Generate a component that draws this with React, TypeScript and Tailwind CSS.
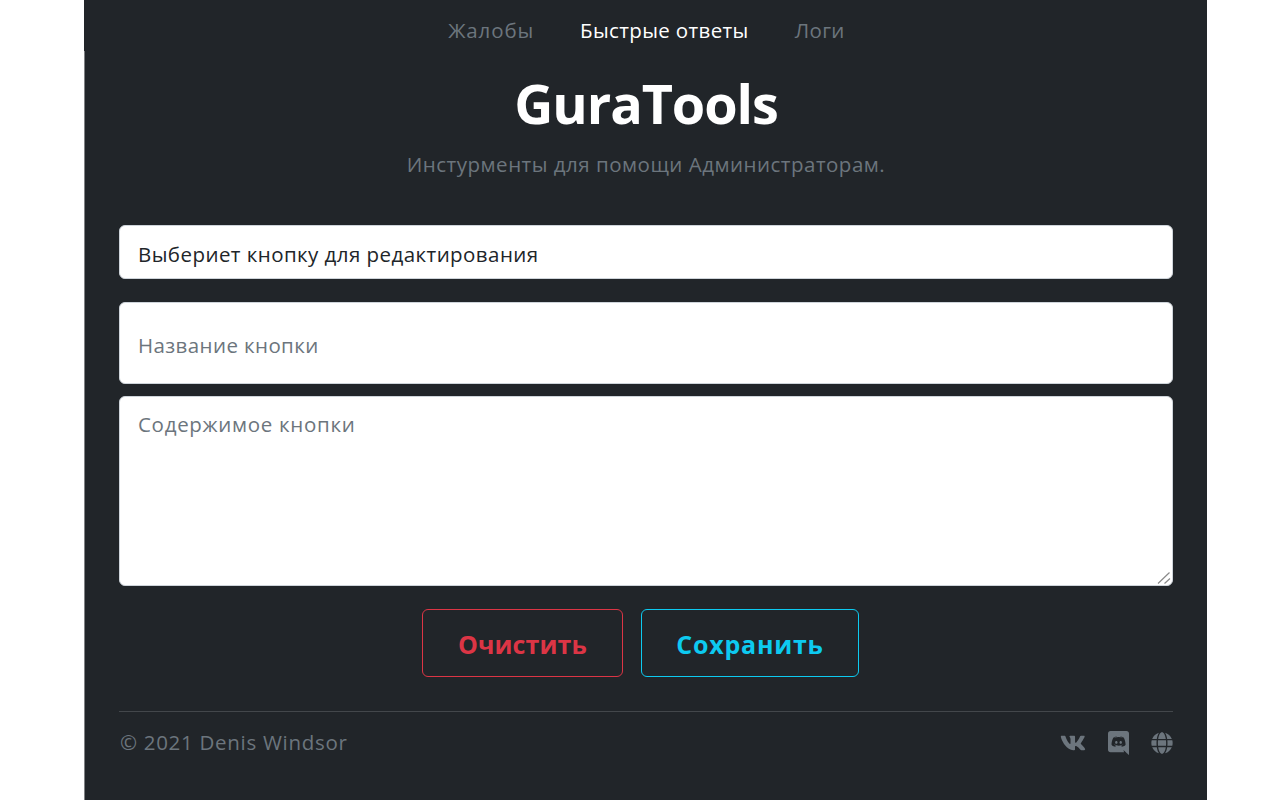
import { FaVk, FaGlobe } from "react-icons/fa";

const font = "font-['Open_Sans','Noto_Sans',sans-serif]";

function DiscordIcon() {
  return (
    <svg viewBox="0 0 448 512" className="w-[21px] h-[24px] fill-current">
      <path d="M297.216 243.2c0 15.616-11.52 28.416-26.112 28.416-14.336 0-26.112-12.8-26.112-28.416s11.52-28.416 26.112-28.416c14.592 0 26.112 12.8 26.112 28.416zm-119.552-28.416c-14.592 0-26.112 12.8-26.112 28.416s11.776 28.416 26.112 28.416c14.592 0 26.112-12.8 26.112-28.416.256-15.616-11.52-28.416-26.112-28.416zM448 52.736V512c-64.494-56.994-43.868-38.128-118.784-107.776l13.568 47.36H52.48C23.552 451.584 0 428.032 0 398.848V52.736C0 23.552 23.552 0 52.48 0h343.04C424.448 0 448 23.552 448 52.736zm-72.96 242.688c0-82.432-36.864-149.248-36.864-149.248-36.864-27.648-71.936-26.88-71.936-26.88l-3.584 4.096c43.52 13.312 63.744 32.512 63.744 32.512-60.813-33.329-132.244-33.335-191.232-7.424-9.472 4.352-15.104 7.424-15.104 7.424s21.248-20.224 67.328-33.536l-2.56-3.072s-35.072-.768-71.936 26.88c0 0-36.864 66.816-36.864 149.248 0 0 21.504 37.12 78.08 38.912 0 0 9.472-11.52 17.152-21.248-32.512-9.728-44.8-30.208-44.8-30.208 3.766 2.636 9.976 6.053 10.496 6.4 43.21 24.198 104.588 32.126 159.744 8.96 8.96-3.328 18.944-8.192 29.44-15.104 0 0-12.8 20.992-46.336 30.464 7.68 9.728 16.896 20.736 16.896 20.736 56.576-1.792 78.336-38.912 78.336-38.912z" />
    </svg>
  );
}

export default function App() {
  return (
    <div className={`h-[800px] bg-white overflow-hidden ${font}`}>
      <div className="ml-[84px] w-[1123px] h-[800px] bg-[#212529] flex flex-col">
        <nav className="h-[51px] shrink-0 flex justify-center gap-[46px] pt-[15px] pl-[2px] text-[20.5px] leading-[30px] tracking-[0.36px] text-[#6c757d]">
          <a className="tracking-[0.86px]">Жалобы</a>
          <a className="text-white">Быстрые ответы</a>
          <a>Логи</a>
        </nav>
        <div className="flex-1 border-l border-[#7f8184] px-[34px] flex flex-col">
          <h1 className="mt-[13px] text-center text-[54px] leading-[78px] tracking-[-1.1px] font-bold text-white">GuraTools</h1>
          <p className="mt-[7px] text-center text-[20.5px] leading-[30px] tracking-[0.5px] text-[#6c757d]">Инстурменты для помощи Администраторам.</p>
          <input
            readOnly
            value="Выбериет кнопку для редактирования"
            className="mt-[46px] h-[54px] w-full rounded-[6px] border border-[#ced4da] bg-white px-[18px] pt-[3px] text-[20.5px] tracking-[0.44px] text-[#212529] outline-none"
          />
          <input
            readOnly
            placeholder="Название кнопки"
            className="mt-[23px] h-[82px] w-full rounded-[6px] border border-[#ced4da] bg-white px-[18px] pt-[3px] text-[20.5px] tracking-[0.4px] text-[#212529] outline-none placeholder:text-[#6c757d]"
          />
          <div className="relative mt-[12px] h-[190px]">
            <textarea
              readOnly
              placeholder="Содержимое кнопки"
              className="block h-full w-full resize-none rounded-[6px] border border-[#ced4da] bg-white px-[18px] py-[12px] text-[20.5px] leading-[30px] tracking-[0.7px] text-[#212529] outline-none placeholder:text-[#6c757d]"
            />
            <svg viewBox="0 0 14 13" className="absolute right-[2px] bottom-[2px] w-[14px] h-[13px] stroke-[#8a8a8a]" fill="none">
              <path d="M1 12.5 L12.5 1.5 M7.5 12.5 L13 7.5" strokeWidth="1.2" />
            </svg>
          </div>
          <div className="mt-[23px] flex justify-center gap-[18px] pr-[11px]">
            <button className="h-[68px] w-[201px] rounded-[6px] border border-[#dc3545] pt-[3px] text-[25px] tracking-[0.1px] font-bold text-[#dc3545]">Очистить</button>
            <button className="h-[68px] w-[218px] rounded-[6px] border border-[#0dcaf0] pt-[3px] text-[25px] tracking-[0.75px] font-bold text-[#0dcaf0]">Сохранить</button>
          </div>
          <footer className="mt-[34px] border-t border-[#43474b] pt-[15px] flex items-center justify-between">
            <span className="pl-[1px] text-[20.5px] leading-[30px] tracking-[0.7px] text-[#6c757d]">© 2021 Denis Windsor</span>
            <div className="flex items-center gap-[22px] pt-[1px] text-[#6c757d]">
              <FaVk size={26} />
              <DiscordIcon />
              <FaGlobe size={22} />
            </div>
          </footer>
        </div>
      </div>
    </div>
  );
}
